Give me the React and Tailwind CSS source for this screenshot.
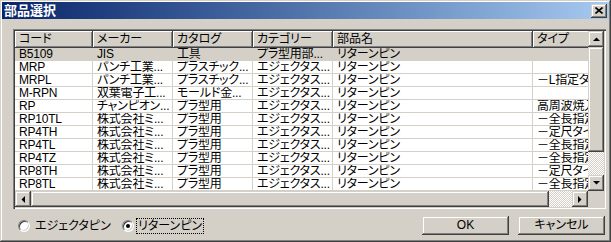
import React from "react";

const raised =
  "bg-[#d4d0c8] shadow-[inset_-1px_-1px_#404040,inset_1px_1px_#d4d0c8,inset_-2px_-2px_#808080,inset_2px_2px_#ffffff]";
const headRaised =
  "bg-[#d4d0c8] shadow-[inset_-1px_-1px_#404040,inset_1px_1px_#ffffff,inset_-2px_-2px_#808080]";
const checker =
  "bg-[repeating-conic-gradient(#d4d0c8_0_25%,#ffffff_0_50%)] bg-[length:2px_2px]";

const cols = [
  { title: "コード", w: "w-[78px]" },
  { title: "メーカー", w: "w-[80px]" },
  { title: "カタログ", w: "w-[80px]" },
  { title: "カテゴリー", w: "w-[80px]" },
  { title: "部品名", w: "w-[200px]" },
  { title: "タイプ", w: "w-[120px]" },
];

const rows = [
  ["B5109", "JIS", "工具", "プラ型用部...", "リターンピン", ""],
  ["MRP", "パンチ工業...", "プラスチック...", "エジェクタス...", "リターンピン", ""],
  ["MRPL", "パンチ工業...", "プラスチック...", "エジェクタス...", "リターンピン", "－L指定タイプ"],
  ["M-RPN", "双葉電子工...", "モールド金...", "エジェクタス...", "リターンピン", ""],
  ["RP", "チャンピオン...", "プラ型用", "エジェクタス...", "リターンピン", "高周波焼入れ"],
  ["RP10TL", "株式会社ミ...", "プラ型用", "エジェクタス...", "リターンピン", "－全長指定"],
  ["RP4TH", "株式会社ミ...", "プラ型用", "エジェクタス...", "リターンピン", "－定尺タイプ"],
  ["RP4TL", "株式会社ミ...", "プラ型用", "エジェクタス...", "リターンピン", "－全長指定"],
  ["RP4TZ", "株式会社ミ...", "プラ型用", "エジェクタス...", "リターンピン", "－全長指定"],
  ["RP8TH", "株式会社ミ...", "プラ型用", "エジェクタス...", "リターンピン", "－定尺タイプ"],
  ["RP8TL", "株式会社ミ...", "プラ型用", "エジェクタス...", "リターンピン", "－全長指定"],
];

// 小さい三角の矢印
function Arrow({ dir }) {
  const pts = {
    up: "0,4 7,4 3.5,0.5",
    down: "0,0 7,0 3.5,3.5",
    left: "4,0 4,7 0.5,3.5",
    right: "0,0 0,7 3.5,3.5",
  }[dir];
  const vert = dir === "up" || dir === "down";
  return (
    <svg width={vert ? 7 : 4} height={vert ? 4 : 7} viewBox={vert ? "0 0 7 4" : "0 0 4 7"}>
      <polygon points={pts} fill="#000" />
    </svg>
  );
}

function ScrollBtn({ dir }) {
  return (
    <div className={`${raised} w-[16px] h-[16px] flex items-center justify-center shrink-0`}>
      <Arrow dir={dir} />
    </div>
  );
}

function Radio({ checked }) {
  return (
    <div className="w-[12px] h-[12px] rounded-full bg-white border border-t-[#808080] border-l-[#808080] border-r-white border-b-white shadow-[inset_1px_1px_#404040,inset_-1px_-1px_#d4d0c8] flex items-center justify-center shrink-0">
      {checked && <div className="w-[4px] h-[4px] rounded-full bg-black" />}
    </div>
  );
}

export default function App() {
  return (
    <div className="w-[611px] h-[242px] bg-[#d4d0c8] p-[2px] flex flex-col shadow-[inset_-1px_-1px_#404040,inset_1px_1px_#d4d0c8,inset_-2px_-2px_#808080,inset_2px_2px_#ffffff] font-['Liberation_Sans','Noto_Sans_CJK_JP',sans-serif] text-[12px] text-black [font-feature-settings:'palt']">
      {/* タイトルバー */}
      <div className="h-[17px] flex items-center bg-linear-to-r from-[#0a246a] to-[#a6caf0]">
        <span className="pl-[2px] text-white font-bold text-[13px] leading-[17px]">部品選択</span>
        <div className={`${raised} ml-auto mr-[2px] w-[16px] h-[14px] flex items-center justify-center`}>
          <svg width="8" height="7" viewBox="0 0 8 7">
            <path d="M0.5 0.5 L7.5 6.5 M7.5 0.5 L0.5 6.5" stroke="#000" strokeWidth="1.6" />
          </svg>
        </div>
      </div>

      {/* リスト */}
      <div className="mt-[10px] ml-[11px] w-[593px] h-[180px] p-[2px] bg-white shadow-[inset_1px_1px_#808080,inset_2px_2px_#404040,inset_-1px_-1px_#ffffff,inset_-2px_-2px_#d4d0c8]">
        <div className="flex h-[160px]">
          <div className="w-[573px] overflow-hidden">
            <div className="flex h-[17px] w-max">
              {cols.map((c) => (
                <div key={c.title} className={`${headRaised} ${c.w} shrink-0 pl-[4px] leading-[16px] whitespace-nowrap overflow-hidden`}>
                  {c.title}
                </div>
              ))}
            </div>
            {rows.map((r, i) => (
              <div
                key={r[0]}
                className={`flex h-[13px] w-max border-b border-[#d4d0c8] ${i === 0 ? "bg-[#d4d0c8]" : "bg-white"}`}
              >
                {r.map((v, j) => (
                  <div
                    key={j}
                    className={`${cols[j].w} shrink-0 h-[12px] pl-[4px] leading-[12px] whitespace-nowrap overflow-hidden border-r border-[#d4d0c8] tracking-[-0.2px]`}
                  >
                    {v}
                  </div>
                ))}
              </div>
            ))}
          </div>
          <div className="w-[16px] flex flex-col">
            <ScrollBtn dir="up" />
            <div className={`${raised} h-[105px]`} />
            <div className={`${checker} flex-1`} />
            <ScrollBtn dir="down" />
          </div>
        </div>
        <div className="flex h-[16px]">
          <ScrollBtn dir="left" />
          <div className={`${raised} w-[518px]`} />
          <div className={`${checker} w-[23px]`} />
          <ScrollBtn dir="right" />
          <div className="w-[16px] bg-[#d4d0c8]" />
        </div>
      </div>

      {/* 下部 */}
      <div className="mt-[6px] h-[20px] flex items-center">
        <div className="ml-[16px] w-[104px] flex items-center gap-[5px] mt-[1px]">
          <Radio />
          <span className="leading-[14px]">エジェクタピン</span>
        </div>
        <div className="flex items-center gap-[2px] mt-[1px]">
          <Radio checked />
          <span className="leading-[14px] px-[1px] border border-dotted border-black">リターンピン</span>
        </div>
        <div className="ml-auto mr-[4px] flex gap-[9px]">
          <button className={`${raised} w-[87px] h-[19px] leading-[19px] text-center`}>OK</button>
          <button className={`${raised} w-[87px] h-[19px] leading-[19px] text-center`}>キャンセル</button>
        </div>
      </div>
    </div>
  );
}
